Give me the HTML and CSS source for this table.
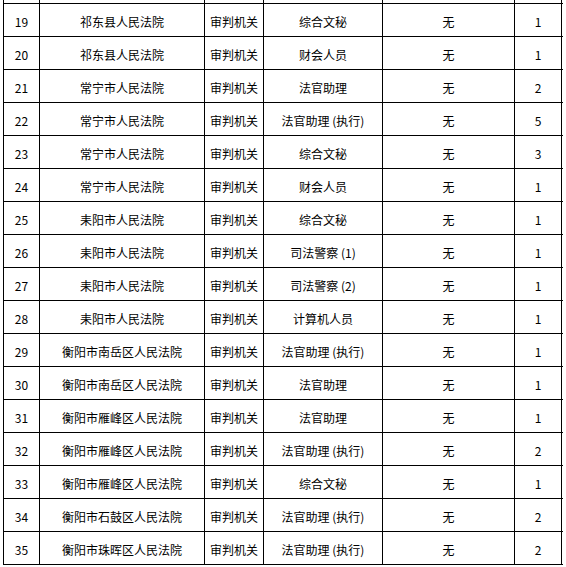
FILE: index.html
```html
<!DOCTYPE html>
<html lang="zh-CN">
<head>
<meta charset="utf-8">
<title>职位表</title>
<link rel="stylesheet" href="styles.css">
</head>
<body>
<div class="sheet">
  <div class="row lead"><div class="c"></div><div class="c"></div><div class="c"></div><div class="c"></div><div class="c"></div><div class="c"></div></div>
  <div class="row"><div class="c">19</div><div class="c">祁东县人民法院</div><div class="c">审判机关</div><div class="c">综合文秘</div><div class="c">无</div><div class="c">1</div></div>
  <div class="row"><div class="c">20</div><div class="c">祁东县人民法院</div><div class="c">审判机关</div><div class="c">财会人员</div><div class="c">无</div><div class="c">1</div></div>
  <div class="row"><div class="c">21</div><div class="c">常宁市人民法院</div><div class="c">审判机关</div><div class="c">法官助理</div><div class="c">无</div><div class="c">2</div></div>
  <div class="row"><div class="c">22</div><div class="c">常宁市人民法院</div><div class="c">审判机关</div><div class="c">法官助理 (执行)</div><div class="c">无</div><div class="c">5</div></div>
  <div class="row"><div class="c">23</div><div class="c">常宁市人民法院</div><div class="c">审判机关</div><div class="c">综合文秘</div><div class="c">无</div><div class="c">3</div></div>
  <div class="row"><div class="c">24</div><div class="c">常宁市人民法院</div><div class="c">审判机关</div><div class="c">财会人员</div><div class="c">无</div><div class="c">1</div></div>
  <div class="row"><div class="c">25</div><div class="c">耒阳市人民法院</div><div class="c">审判机关</div><div class="c">综合文秘</div><div class="c">无</div><div class="c">1</div></div>
  <div class="row"><div class="c">26</div><div class="c">耒阳市人民法院</div><div class="c">审判机关</div><div class="c">司法警察 (1)</div><div class="c">无</div><div class="c">1</div></div>
  <div class="row"><div class="c">27</div><div class="c">耒阳市人民法院</div><div class="c">审判机关</div><div class="c">司法警察 (2)</div><div class="c">无</div><div class="c">1</div></div>
  <div class="row"><div class="c">28</div><div class="c">耒阳市人民法院</div><div class="c">审判机关</div><div class="c">计算机人员</div><div class="c">无</div><div class="c">1</div></div>
  <div class="row"><div class="c">29</div><div class="c">衡阳市南岳区人民法院</div><div class="c">审判机关</div><div class="c">法官助理 (执行)</div><div class="c">无</div><div class="c">1</div></div>
  <div class="row"><div class="c">30</div><div class="c">衡阳市南岳区人民法院</div><div class="c">审判机关</div><div class="c">法官助理</div><div class="c">无</div><div class="c">1</div></div>
  <div class="row"><div class="c">31</div><div class="c">衡阳市雁峰区人民法院</div><div class="c">审判机关</div><div class="c">法官助理</div><div class="c">无</div><div class="c">1</div></div>
  <div class="row"><div class="c">32</div><div class="c">衡阳市雁峰区人民法院</div><div class="c">审判机关</div><div class="c">法官助理 (执行)</div><div class="c">无</div><div class="c">2</div></div>
  <div class="row"><div class="c">33</div><div class="c">衡阳市雁峰区人民法院</div><div class="c">审判机关</div><div class="c">综合文秘</div><div class="c">无</div><div class="c">1</div></div>
  <div class="row"><div class="c">34</div><div class="c">衡阳市石鼓区人民法院</div><div class="c">审判机关</div><div class="c">法官助理 (执行)</div><div class="c">无</div><div class="c">2</div></div>
  <div class="row"><div class="c">35</div><div class="c">衡阳市珠晖区人民法院</div><div class="c">审判机关</div><div class="c">法官助理 (执行)</div><div class="c">无</div><div class="c">2</div></div>
</div>
</body>
</html>
```
FILE: styles.css
```css
html, body {
  margin: 0;
  padding: 0;
  background: #fff;
}
body {
  font-family: "Noto Sans CJK SC", "Liberation Sans", sans-serif;
  font-size: 12px;
  color: #000;
  overflow: hidden;
}
.sheet {
  margin-left: 3px;
  width: 559px;
  border-left: 1px solid #000;
}
.row {
  display: grid;
  grid-template-columns: 36px 165px 59px 119px 132px 47px;
  height: 33px;
  box-sizing: border-box;
  border-bottom: 1px solid #000;
}
.row.lead {
  margin-top: -29px;
}
.c {
  box-sizing: border-box;
  border-right: 1px solid #000;
  display: flex;
  align-items: center;
  justify-content: center;
  padding-top: 3px;
  white-space: nowrap;
  line-height: 1;
}
```
